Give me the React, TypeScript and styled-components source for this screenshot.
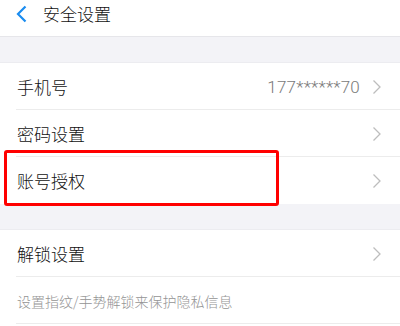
import styled, { createGlobalStyle } from "styled-components"

const GlobalStyle = createGlobalStyle`
  html, body {
    margin: 0;
    padding: 0;
    background: #ffffff;
  }
  body {
    font-family: "Noto Sans CJK SC", "Noto Sans", sans-serif;
    font-weight: 300;
    -webkit-font-smoothing: antialiased;
  }
`

const Page = styled.div`
  width: 400px;
  height: 326px;
  overflow: hidden;
  background: #ffffff;
`

const Header = styled.div`
  height: 36px;
  display: flex;
  align-items: center;
  padding-left: 16px;
  gap: 15px;
  border-bottom: 1px solid #e6e6ea;
  box-sizing: content-box;
`

const Title = styled.div`
  font-size: 17px;
  color: #111111;
  line-height: 1;
  margin-top: -9px;
`

const BackIcon = styled.svg`
  width: 12px;
  height: 18px;
  margin-top: -8px;
`

const Gap = styled.div`
  height: 25px;
  background: #f3f3f7;
  border-bottom: 1px solid #ececf0;
`

const Group = styled.div`
  background: #ffffff;
`

const Row = styled.div<{ $last?: boolean }>`
  position: relative;
  height: 47px;
  display: flex;
  align-items: center;
  padding: 0 18px 0 17px;
  box-sizing: border-box;
  &::after {
    content: "";
    position: absolute;
    left: 16px;
    right: 0;
    bottom: 0;
    height: 1px;
    background: ${(p) => (p.$last ? "transparent" : "#ececec")};
  }
`

const Label = styled.div`
  flex: 1;
  font-size: 17px;
  color: #111111;
`

const Value = styled.div`
  font-family: "Roboto", "Noto Sans", sans-serif;
  font-size: 17px;
  color: #7a7a7a;
  margin-right: 12px;
  letter-spacing: 0.2px;
`

const Hint = styled.div`
  font-size: 14px;
  color: #949494;
`

const Highlight = styled.div`
  position: absolute;
  left: 4px;
  top: -7px;
  width: 275px;
  height: 56px;
  border: 3.5px solid #ff0000;
  border-radius: 3px;
  box-sizing: border-box;
  pointer-events: none;
`

const Chevron = () => (
  <svg width="10" height="16" viewBox="0 0 10 16">
    <path d="M1.5 1.5 L8 8 L1.5 14.5" fill="none" stroke="#bdbdbd" strokeWidth="1.3" />
  </svg>
)

export default function App() {
  return (
    <Page>
      <GlobalStyle />
      <Header>
        <BackIcon viewBox="0 0 12 18">
          <path d="M9.5 1.5 L2 9 L9.5 16.5" fill="none" stroke="#1a8cf0" strokeWidth="2.2" />
        </BackIcon>
        <Title>安全设置</Title>
      </Header>
      <Gap />
      <Group>
        <Row>
          <Label>手机号</Label>
          <Value>177******70</Value>
          <Chevron />
        </Row>
        <Row>
          <Label>密码设置</Label>
          <Chevron />
        </Row>
        <Row $last>
          <Label>账号授权</Label>
          <Chevron />
          <Highlight />
        </Row>
      </Group>
      <Gap />
      <Group>
        <Row>
          <Label>解锁设置</Label>
          <Chevron />
        </Row>
        <Row>
          <Hint>设置指纹/手势解锁来保护隐私信息</Hint>
        </Row>
      </Group>
    </Page>
  )
}
